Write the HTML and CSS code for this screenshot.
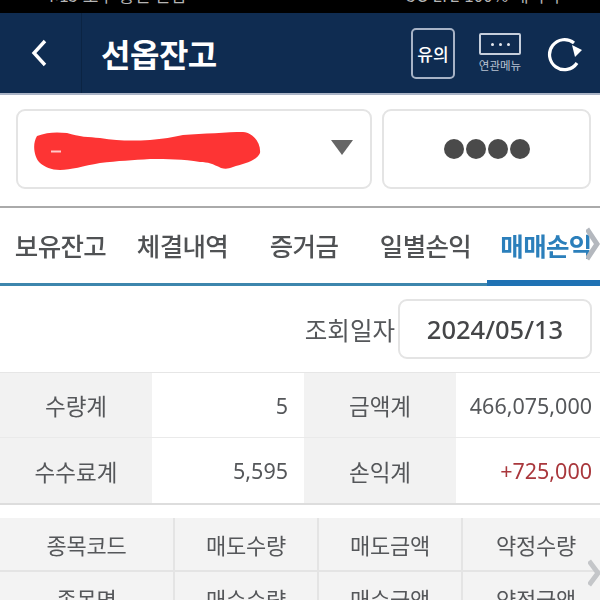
FILE: index.html
```html
<!DOCTYPE html>
<html lang="ko">
<head>
    <meta charset="UTF-8">
    <meta name="viewport" content="width=device-width, initial-scale=1.0">
    <title>선옵잔고</title>
    <link rel="stylesheet" href="styles.css">
</head>
<body>
    <div class="status-bar">
        <span>4:15 오후 통신 알림</span>
        <span>5G LTE 100% 배터리</span>
    </div>

    <div class="top-bar">
        <div class="back">
            <svg width="20" height="30" viewBox="0 0 20 30"><path d="M15 3 L4 15 L15 27" fill="none" stroke="#fff" stroke-width="3.4"/></svg>
        </div>
        <h1 class="title">선옵잔고</h1>
        <div class="notice">유의</div>
        <div class="menu-link">
            <div class="menu-box"><i></i><i></i><i></i></div>
            <span>연관메뉴</span>
        </div>
        <svg class="refresh" width="36" height="38" viewBox="0 0 36 38">
            <path d="M28 9 A15 15 0 1 0 31 29" fill="none" stroke="#fff" stroke-width="3.2"/>
            <path d="M26 11 L36 16 L29 23 Z" fill="#fff"/>
        </svg>
    </div>

    <div class="account-row">
        <div class="box account-select">
            <svg class="scribble" width="228" height="44" viewBox="0 0 228 44">
                <path d="M4 7 C14 3 24 3 34 4 C46 8 56 8 67 9 C85 12 100 12 117 11 C130 10 140 8 150 6 C170 5 195 3 210 3 C222 4 228 16 227 24 C224 32 210 35 200 38 C195 40 192 40 188 39 C180 35 175 33 167 33 C150 30 135 30 117 30 C100 31 85 32 67 34 C50 37 38 41 27 41 C18 41 12 38 7 34 C1 28 -1 15 4 7 Z" fill="#fd3434"/>
                <path d="M18 22.5 H28" stroke="#ffc9c9" stroke-width="2"/>
            </svg>
            <span class="caret"></span>
        </div>
        <div class="box password"><i></i><i></i><i></i><i></i></div>
    </div>

    <div class="tabs">
        <div class="tab">보유잔고</div>
        <div class="tab">체결내역</div>
        <div class="tab">증거금</div>
        <div class="tab">일별손익</div>
        <div class="tab active">매매손익</div>
        <svg class="tab-more" width="14" height="36" viewBox="0 0 14 36"><path d="M1 3 L11 18 L1 33" fill="none" stroke="#b4b8be" stroke-width="5"/></svg>
    </div>

    <div class="date-row">
        <span class="date-label">조회일자</span>
        <div class="box date-box">2024/05/13</div>
    </div>

    <div class="summary">
        <div class="cell head">수량계</div>
        <div class="cell num">5</div>
        <div class="cell head">금액계</div>
        <div class="cell num">466,075,000</div>
        <div class="cell head">수수료계</div>
        <div class="cell num">5,595</div>
        <div class="cell head">손익계</div>
        <div class="cell num plus">+725,000</div>
    </div>

    <div class="list-head">
        <div>종목코드</div>
        <div>매도수량</div>
        <div>매도금액</div>
        <div>약정수량</div>
        <div>종목명</div>
        <div>매수수량</div>
        <div>매수금액</div>
        <div>약정금액</div>
        <svg class="list-more" width="12" height="28" viewBox="0 0 12 28"><path d="M1 2 L10 14 L1 26" fill="none" stroke="#c4c6c9" stroke-width="5"/></svg>
    </div>
</body>
</html>
```

FILE: styles.css
```css
html, body {
    height: 100%;
    margin: 0;
    padding: 0;
    overflow: hidden;
}

body {
    font-family: "Noto Sans CJK KR", "Noto Sans", sans-serif;
    background-color: #fff;
    color: #484a4d;
    width: 600px;
    height: 600px;
    filter: blur(0.5px);
}

.status-bar {
    height: 13px;
    background-color: #000;
    color: #b5b5b5;
    font-size: 17px;
    line-height: 0;
    padding: 0 40px 0 45px;
    display: flex;
    justify-content: space-between;
    overflow: hidden;
}

.status-bar span {
    margin-top: -5px;
}

.top-bar {
    height: 80px;
    background-color: #0f2c51;
    border-bottom: 2px solid #aab4c6;
    display: flex;
    align-items: center;
    color: #fff;
}

.back {
    width: 82px;
    height: 80px;
    box-sizing: border-box;
    border-right: 1px solid #0b2443;
    padding-left: 30px;
    display: flex;
    align-items: center;
}

.title {
    margin: 0 0 0 19px;
    font-size: 32px;
    font-weight: 700;
    letter-spacing: -0.5px;
    flex: 1;
}

.notice {
    width: 40px;
    height: 47px;
    border: 2px solid #a7b3c6;
    border-radius: 5px;
    font-size: 17px;
    font-weight: 500;
    display: flex;
    align-items: center;
    justify-content: center;
    margin-right: 23px;
}

.menu-link {
    width: 44px;
    margin-right: 24px;
    display: flex;
    flex-direction: column;
    align-items: center;
    font-size: 11.5px;
    line-height: 15px;
    color: #b9c3d2;
    white-space: nowrap;
}

.menu-box {
    width: 38px;
    height: 18px;
    border: 2px solid #c5cedb;
    border-radius: 2px;
    display: flex;
    align-items: center;
    justify-content: center;
    gap: 5px;
    margin-bottom: 3px;
}

.menu-box i {
    width: 3px;
    height: 3px;
    background-color: #e6eaf0;
    border-radius: 50%;
}

.refresh {
    margin-right: 18px;
}

.box {
    border: 2px solid #e4e4e4;
    border-radius: 9px;
    box-sizing: border-box;
    background-color: #fff;
}

.account-row {
    display: flex;
    gap: 10px;
    padding: 14px 9px 0 16px;
    height: 80px;
}

.account-select {
    width: 356px;
    height: 80px;
    position: relative;
    display: flex;
    align-items: center;
    justify-content: flex-end;
    padding-right: 17px;
}

.scribble {
    position: absolute;
    left: 15px;
    top: 18px;
}

.caret {
    width: 0;
    height: 0;
    border-left: 11px solid transparent;
    border-right: 11px solid transparent;
    border-top: 15px solid #666;
    margin-bottom: 3px;
}

.password {
    width: 209px;
    height: 80px;
    display: flex;
    align-items: center;
    justify-content: center;
    gap: 2px;
}

.password i {
    width: 20px;
    height: 20px;
    border-radius: 50%;
    background-color: #4a4a4a;
}

.tabs {
    margin-top: 17px;
    height: 75px;
    border-top: 2px solid #aaa;
    border-bottom: 3px solid #3d86ad;
    display: flex;
    position: relative;
}

.tab {
    font-size: 25.5px;
    font-weight: 500;
    letter-spacing: -0.6px;
    color: #505254;
    line-height: 74px;
    white-space: nowrap;
    text-align: center;
    flex-shrink: 0;
}

.tab:nth-child(1) { width: 121px; }
.tab:nth-child(2) { width: 123px; }
.tab:nth-child(3) { width: 120px; }
.tab:nth-child(4) { width: 123px; }

.tab.active {
    width: 118px;
    padding-right: 4px;
    color: #2b7fbb;
    font-weight: 700;
    height: 78px;
    box-shadow: inset 0 -6px 0 #1f72b4;
}

.tab-more {
    position: absolute;
    right: 0;
    top: 18px;
}

.date-row {
    display: flex;
    justify-content: flex-end;
    align-items: center;
    gap: 3px;
    height: 86px;
    padding-right: 8px;
}

.date-label {
    font-size: 24.5px;
    color: #55575a;
}

.date-box {
    width: 194px;
    height: 60px;
    font-size: 25.5px;
    font-weight: 500;
    color: #454648;
    text-align: center;
    line-height: 56px;
    font-family: "Noto Sans", sans-serif;
}

.summary {
    display: grid;
    grid-template-columns: 152px 152px 152px 144px;
    border-top: 1px solid #e6e6e6;
    border-bottom: 2px solid #ddd;
}

.cell {
    height: 64px;
    display: flex;
    align-items: center;
    font-size: 22.5px;
    color: #55575a;
    border-bottom: 1px solid #eaeaea;
}

.cell:nth-last-child(-n+4) {
    border-bottom: none;
    height: 65px;
}

.cell.head {
    background-color: #f2f2f2;
    justify-content: center;
}

.cell.num {
    justify-content: flex-end;
    padding-right: 16px;
    font-size: 21.5px;
    font-family: "Noto Sans", sans-serif;
}

.cell:nth-child(4n) {
    padding-right: 8px;
}

.cell.plus {
    color: #a9373c;
}

.list-head {
    margin-top: 13px;
    display: grid;
    grid-template-columns: 175px 144px 144px 137px;
    grid-auto-rows: 54px;
    position: relative;
}

.list-head div {
    background-color: #f3f3f3;
    border-right: 2px solid #e4e4e4;
    border-bottom: 2px solid #e4e4e4;
    text-align: center;
    font-size: 22px;
    line-height: 52px;
    letter-spacing: -0.3px;
    color: #55575a;
}

.list-head div:nth-child(4n) {
    padding-left: 9px;
    border-right: none;
}

.list-more {
    position: absolute;
    right: 0;
    top: 41px;
}
```
